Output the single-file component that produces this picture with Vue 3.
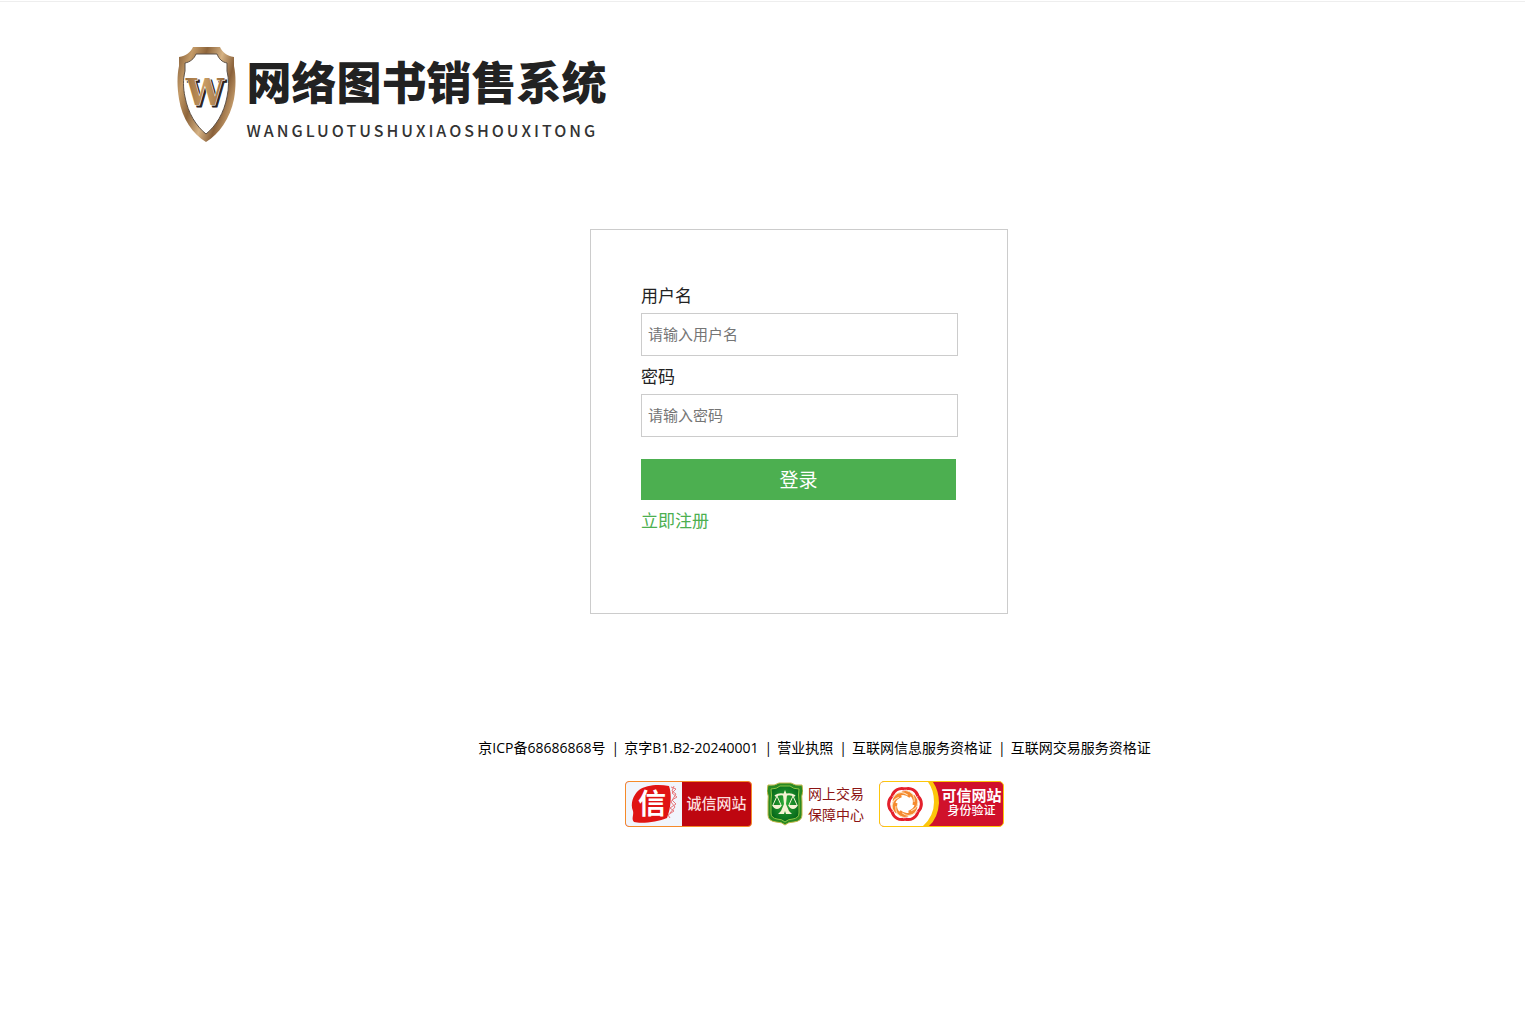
<template>
  <div class="login-page">
    <!-- 顶部 logo -->
    <header class="header">
      <div class="logo">
        <svg class="logo-shield" viewBox="0 0 60 98" aria-hidden="true">
          <defs>
            <linearGradient id="gold" x1="0" y1="0" x2="1" y2="0.5">
              <stop offset="0" stop-color="#7d5733" />
              <stop offset="0.22" stop-color="#c49b68" />
              <stop offset="0.42" stop-color="#8e653b" />
              <stop offset="0.65" stop-color="#d5b284" />
              <stop offset="0.85" stop-color="#8a613a" />
              <stop offset="1" stop-color="#c09767" />
            </linearGradient>
            <linearGradient id="goldLetter" x1="0" y1="0" x2="1" y2="0">
              <stop offset="0" stop-color="#9a6d3e" />
              <stop offset="0.5" stop-color="#c79b63" />
              <stop offset="1" stop-color="#9a6d3e" />
            </linearGradient>
          </defs>
          <path
            d="M16 2 H43 C45 7 50 11 57 12 V21 C59 30 59 42 57 54 C53 74 42 89 29 97 C16 89 5 74 2 54 C0 42 0 30 2 21 V12 C9 11 14 7 16 2 Z"
            fill="url(#gold)"
          />
          <path
            d="M19 9 H40 C42 14 45 17 50 18 V26 C52 34 52 43 50 52 C47 68 39 81 29 89 C19 81 11 68 8 52 C6 43 6 34 8 26 V18 C13 17 17 14 19 9 Z"
            fill="#fff"
            stroke="#5d5147"
            stroke-width="1"
          />
          <text x="30" y="62" text-anchor="middle" class="logo-letter shadow">W</text>
          <text x="28" y="60" text-anchor="middle" class="logo-letter" fill="url(#goldLetter)">W</text>
        </svg>
        <div class="logo-text">
          <h1 class="logo-title">网络图书销售系统</h1>
          <p class="logo-pinyin">WANGLUOTUSHUXIAOSHOUXITONG</p>
        </div>
      </div>
    </header>

    <!-- 登录表单 -->
    <main class="main">
      <form class="login-form" @submit.prevent="handleLogin">
        <label class="form-label" for="username">用户名</label>
        <input
          id="username"
          v-model="form.username"
          class="form-input"
          type="text"
          placeholder="请输入用户名"
        />
        <label class="form-label" for="password">密码</label>
        <input
          id="password"
          v-model="form.password"
          class="form-input"
          type="password"
          placeholder="请输入密码"
        />
        <button class="login-btn" type="submit">登录</button>
        <a class="register-link" href="#/register">立即注册</a>
      </form>
    </main>

    <!-- 底部信息 -->
    <footer class="footer">
      <ul class="licenses">
        <li v-for="item in licenses" :key="item" class="license">{{ item }}</li>
      </ul>
      <div class="badges">
        <div class="badge badge-honest">
          <svg class="honest-seal" viewBox="0 0 56 44" aria-hidden="true">
            <path d="M13 8 C20 3 32 2 43 4 C46 12 45 26 41 36 C32 40 15 42 8 40 C5 37 8 33 7 29 C4 22 7 13 13 8 Z" fill="#e01414" />
            <path d="M45 5 L50 7 L46 11 L51 15 L46 18 L50 22 L44 26 L48 29 L42 33 L44 36 M48 4 L46 9 L50 12 L45 20 L49 25 L44 31" fill="none" stroke="#e8787c" stroke-width="1" />
            <text x="26" y="32" text-anchor="middle" class="seal-text">信</text>
          </svg>
          <span class="honest-label">诚信网站</span>
        </div>

        <div class="badge badge-trade">
          <svg class="trade-icon" viewBox="0 0 36 44" aria-hidden="true">
            <defs>
              <radialGradient id="green" cx="0.5" cy="0.45" r="0.6">
                <stop offset="0" stop-color="#2fae35" />
                <stop offset="1" stop-color="#05651a" />
              </radialGradient>
            </defs>
            <path d="M1 3 Q8 4 12 1 H24 Q28 4 35 3 L36 9 Q34 14 35 20 V33 Q35 39 27 40 Q21 40 18 43 Q15 40 9 40 Q1 39 1 33 V20 Q2 14 0 9 Z" fill="#2a8a22" stroke="#c4b94c" stroke-width="1" />
            <path d="M4 7 Q10 7 13 4 H23 Q26 7 32 7 Q31 13 32 19 V31 Q32 36 26 37 Q21 37 18 40 Q15 37 10 37 Q4 36 4 31 V19 Q5 13 4 7 Z" fill="url(#green)" stroke="#8dc544" stroke-width="1" />
            <g fill="none" stroke="#f5f3d3" stroke-width="1">
              <path d="M8 14 Q13 11 18 13 Q23 11 28 14" stroke-width="2" />
              <path d="M10 14 L6 23 M10 14 L14 23 M26 14 L22 23 M26 14 L30 23" />
            </g>
            <path d="M5 23 H15 Q13 27 10 27 Q7 27 5 23 Z M21 23 H31 Q29 27 26 27 Q23 27 21 23 Z M18 8 L20 13 L19 22 L22 29 L25 32 H19 L18 29 L17 32 H11 L14 29 L17 22 L16 13 Z" fill="#f5f3d3" />
          </svg>
          <div class="trade-label">
            <span>网上交易</span>
            <span>保障中心</span>
          </div>
        </div>

        <div class="badge badge-trust">
          <svg class="trust-icon" viewBox="0 0 60 44" aria-hidden="true">
            <path d="M50 0 H60 V44 H46 Q57 34 57 20 Q57 9 50 0 Z" fill="#d0112b" />
            <path d="M48 0 H53 Q59 9 59 21 Q58 36 49 44 H43 Q54 34 54 20 Q54 8 48 0 Z" fill="#fcc60c" />
            <g fill="none" stroke-width="3">
              <path
                v-for="angle in petals"
                :key="'inner' + angle"
                d="M22 11 C30 9 36 15 34 23"
                :transform="`rotate(${angle} 25 22)`"
                stroke="#f58a2f"
              />
              <path
                v-for="angle in petals"
                :key="angle"
                d="M25 7 A10 10 0 0 1 38 14.5"
                :transform="`rotate(${angle} 25 22)`"
                stroke="#e4202c"
              />
            </g>
            <g fill="none" stroke="#fde3c0" stroke-width="1">
              <path
                v-for="angle in petals"
                :key="'line' + angle"
                d="M26 8 C32 10 35 14 34 20"
                :transform="`rotate(${angle} 25 22)`"
              />
            </g>
          </svg>
          <div class="trust-label">
            <strong>可信网站</strong>
            <span>身份验证</span>
          </div>
        </div>
      </div>
    </footer>
  </div>
</template>

<script setup>
import { reactive } from 'vue'

// 登录表单数据
const form = reactive({
  username: '',
  password: ''
})

// 备案与资质
const licenses = [
  '京ICP备68686868号',
  '京字B1.B2-20240001',
  '营业执照',
  '互联网信息服务资格证',
  '互联网交易服务资格证'
]

// 可信网站图标花瓣角度
const petals = [0, 60, 120, 180, 240, 300]

const handleLogin = () => {
  if (!form.username || !form.password) return
  form.password = ''
}
</script>

<style>
body {
  margin: 0;
  background: #fff;
}
</style>

<style scoped>
.login-page {
  margin-top: 1px;
  border-top: 1px solid #eee;
  font-family: "Open Sans", "Noto Sans CJK SC", sans-serif;
  color: #000;
}

/* 顶部 */
.header {
  max-width: 1172px;
  margin: 0 auto;
  padding-top: 43px;
}

.logo {
  display: flex;
  gap: 10px;
  height: 98px;
}

.logo-shield {
  width: 60px;
  height: 98px;
}

.logo-letter {
  font-family: "DejaVu Serif Condensed", "DejaVu Serif", serif;
  font-size: 38px;
  font-weight: bold;
  stroke: #fff;
  stroke-width: 1px;
  paint-order: stroke;
}

.logo-letter.shadow {
  fill: #2a211c;
  stroke: #2a211c;
}

.logo-title {
  margin: 0;
  font-family: "Noto Sans CJK SC", sans-serif;
  font-size: 45px;
  font-weight: 900;
  line-height: 72px;
  color: #222;
}

.logo-pinyin {
  margin: 0;
  font-family: "Noto Sans CJK SC", sans-serif;
  font-size: 16px;
  font-weight: 500;
  line-height: 26px;
  letter-spacing: 3px;
  color: #333;
}

/* 登录框 */
.main {
  display: flex;
  justify-content: center;
  padding: 86px 0 0 73px;
}

.login-form {
  box-sizing: border-box;
  width: 418px;
  padding: 50px 49px 76px 50px;
  border: 1px solid #ccc;
}

.form-label {
  display: block;
  padding-bottom: 2px;
  font-size: 17px;
  line-height: 31px;
  color: #222;
}

.form-input {
  display: block;
  box-sizing: border-box;
  width: 100%;
  height: 43px;
  margin-bottom: 5px;
  padding: 0 6px 2px;
  border: 1px solid #ccc;
  font-family: inherit;
  font-size: 15px;
}

.form-input::placeholder {
  color: #757575;
}

.login-btn {
  display: block;
  width: calc(100% - 2px);
  height: 41px;
  margin-top: 22px;
  padding: 0 0 2px;
  border: none;
  background: #4caf50;
  color: #fff;
  font-family: inherit;
  font-size: 19px;
  cursor: pointer;
}

.register-link {
  display: inline-block;
  margin-top: 4px;
  font-size: 17px;
  line-height: 33px;
  color: #4caf50;
  text-decoration: none;
}

/* 底部 */
.footer {
  display: flex;
  flex-direction: column;
  align-items: center;
  padding: 122px 0 0 104px;
}

.licenses {
  display: flex;
  margin: 0;
  padding: 0;
  list-style: none;
  font-size: 14px;
  line-height: 24px;
}

.license + .license::before {
  content: "|";
  margin: 0 5px 0 6px;
}

.badges {
  display: flex;
  align-items: center;
  gap: 15px;
  margin-top: 21px;
}

.badge {
  display: flex;
  box-sizing: border-box;
  height: 46px;
}

.badge-honest {
  width: 127px;
  border: 1px solid #f58a2a;
  border-radius: 4px;
  background: #be0610;
}

.honest-seal {
  width: 56px;
  height: 44px;
  border-radius: 3px 0 0 3px;
  background: #f1f5fc;
}

.seal-text {
  font-family: "Noto Sans CJK SC", sans-serif;
  font-size: 28px;
  font-weight: bold;
  fill: #fff;
}

.honest-label {
  flex: 1;
  font-size: 15px;
  font-weight: 500;
  line-height: 42px;
  text-align: center;
  color: #fbdcdc;
}

.badge-trade {
  align-items: center;
  gap: 5px;
}

.trade-icon {
  width: 36px;
  height: 44px;
}

.trade-label {
  display: flex;
  flex-direction: column;
  font-size: 14px;
  line-height: 21px;
  color: #8c1414;
}

.badge-trust {
  width: 125px;
  border: 1px solid #fcc60c;
  border-radius: 5px;
  background: #d0112b;
}

.trust-icon {
  width: 60px;
  height: 44px;
  border-radius: 4px 0 0 4px;
  background: #fff;
}

.trust-label {
  display: flex;
  flex: 1;
  flex-direction: column;
  align-items: center;
  justify-content: center;
  padding-bottom: 2px;
  font-size: 12px;
  font-weight: 500;
  line-height: 15px;
  color: #fff;
}

.trust-label strong {
  font-size: 15px;
}
</style>
